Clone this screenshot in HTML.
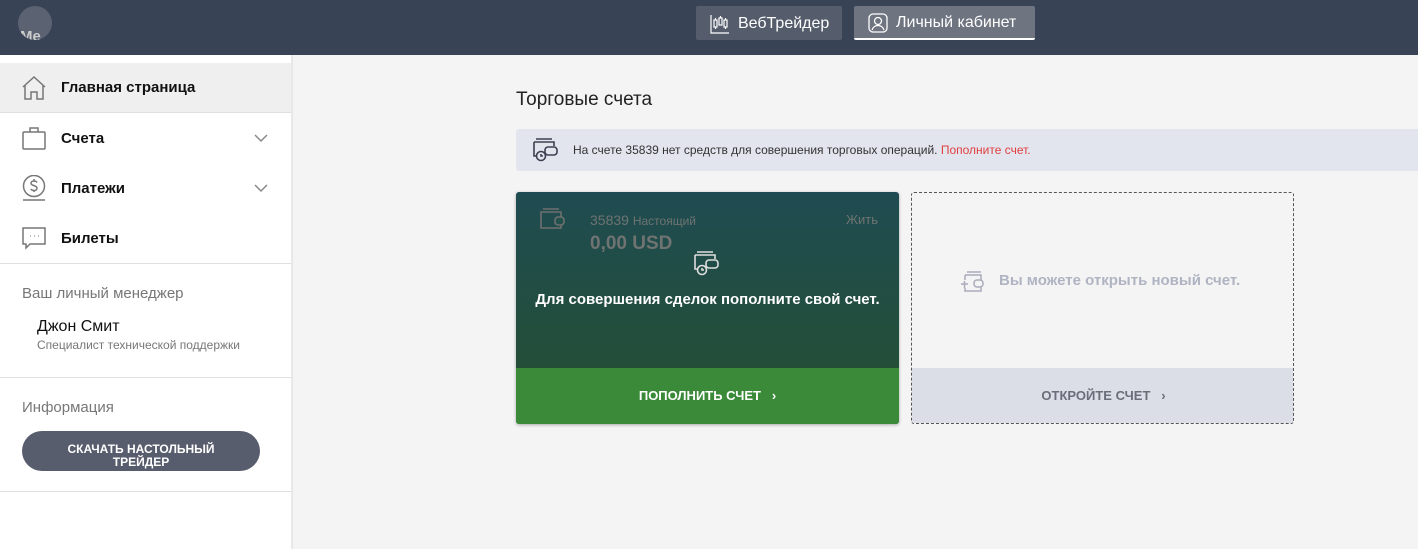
<!DOCTYPE html>
<html><head><meta charset="utf-8"><style>
*{box-sizing:border-box;margin:0;padding:0}
body{width:1418px;height:549px;overflow:hidden;background:#f4f4f4;font-family:"Liberation Sans",sans-serif;position:relative}
.hdr{position:absolute;left:0;top:0;width:1418px;height:55px;background:#394356}
.logo{position:absolute;left:18px;top:6px;width:34px;height:34px;border-radius:50%;background:#5b6272;overflow:hidden}
.logo span{position:absolute;left:2px;top:22px;color:#ccc;font-size:15px;font-weight:bold}
.tb{position:absolute;top:6px;height:34px;border-radius:2px;color:#fff;font-size:16px;display:flex;align-items:center}
.tb span{top:9px}
.side{position:absolute;left:0;top:55px;width:293px;height:494px;background:#fff;border-right:2px solid #e8e8e8}
.row{position:absolute;left:0;width:291px;height:50px;display:flex;align-items:center;font-size:15px;font-weight:bold;color:#111}
.row svg{position:absolute;left:22px}
.row span{position:absolute;left:61px}
.row .chev{position:absolute;left:254px}
.hr{position:absolute;left:0;width:291px;height:1px;background:#e0e0e0}
.card{position:absolute;left:516px;top:192px;width:383px;height:232px;border-radius:3px;overflow:hidden;box-shadow:0 1px 3px rgba(0,0,0,.3);background:linear-gradient(#1f4c52,#254f30)}
</style></head><body>
<div class="hdr">
<div class="logo"><span>Me</span></div>
<div class="tb" style="left:696px;width:146px;background:#555c6b">
<svg style="position:absolute;left:14px;top:8px" width="20" height="20" viewBox="0 0 20 20" fill="none" stroke="#fff" stroke-width="1.2"><path d="M1 1v18h18"/><rect x="4" y="6" width="3" height="7"/><rect x="9" y="4" width="3" height="7"/><rect x="14" y="6" width="3" height="7"/><path d="M5.5 4v2M5.5 13v2M10.5 2v2M15.5 4v2M15.5 13v2"/></svg>
<span style="position:absolute;left:42px;top:9px">ВебТрейдер</span></div>
<div class="tb" style="left:854px;width:181px;background:#6f7481;border-bottom:2px solid #fff">
<svg style="position:absolute;left:14px;top:7px" width="20" height="20" viewBox="0 0 20 20" fill="none" stroke="#fff" stroke-width="1.3"><rect x="1" y="1" width="18" height="18" rx="4"/><circle cx="10" cy="8" r="3.5"/><path d="M4 17c1-3 3.5-4.5 6-4.5s5 1.5 6 4.5"/></svg>
<span style="position:absolute;left:42px;top:8px">Личный кабинет</span></div>
</div>
<div class="side">
<div class="row" style="top:8px;background:#efefef;border-bottom:1px solid #e0e0e0">
<svg width="24" height="24" viewBox="0 0 24 24" fill="none" stroke="#777" stroke-width="1.5"><path d="M1 11L12 1l11 10M3 9v14h6v-7h6v7h6V9"/></svg><span>Главная страница</span></div>
<div class="row" style="top:58px">
<svg width="24" height="24" viewBox="0 0 24 24" fill="none" stroke="#777" stroke-width="1.5"><rect x="1" y="6" width="22" height="17" rx="1"/><path d="M8 6V2h8v4"/></svg><span>Счета</span>
<svg class="chev" width="14" height="14" viewBox="0 0 14 14" fill="none" stroke="#888" stroke-width="1.5"><path d="M1 4l6 6 6-6"/></svg></div>
<div class="row" style="top:108px">
<svg width="24" height="26" viewBox="0 0 24 26" fill="none" stroke="#777" stroke-width="1.5"><circle cx="12" cy="11" r="10.5"/><path d="M1 25h22"/><path d="M15 7.5c-.5-1-1.5-1.5-3-1.5-1.7 0-3 .9-3 2.3 0 3 6 1.7 6 4.9 0 1.4-1.3 2.3-3 2.3-1.5 0-2.6-.6-3.1-1.6M12 4v2M12 15v2"/></svg><span>Платежи</span>
<svg class="chev" width="14" height="14" viewBox="0 0 14 14" fill="none" stroke="#888" stroke-width="1.5"><path d="M1 4l6 6 6-6"/></svg></div>
<div class="row" style="top:158px">
<svg width="24" height="24" viewBox="0 0 24 24" fill="none" stroke="#777" stroke-width="1.5"><path d="M1 2h22v16H8l-4 4v-4H1z"/><path d="M8 10h.5M12 10h.5M16 10h.5" stroke-width="2"/></svg><span>Билеты</span></div>
<div class="hr" style="top:208px"></div>
<div style="position:absolute;left:22px;top:230px;font-size:15px;color:#777">Ваш личный менеджер</div>
<div style="position:absolute;left:37px;top:263px;font-size:16px;color:#111">Джон Смит</div>
<div style="position:absolute;left:37px;top:283px;font-size:12px;color:#777">Специалист технической поддержки</div>
<div class="hr" style="top:322px"></div>
<div style="position:absolute;left:22px;top:344px;font-size:15px;color:#777">Информация</div>
<div style="position:absolute;left:22px;top:376px;width:238px;height:40px;border-radius:20px;background:#585d6d;color:#fff;font-size:12px;font-weight:bold;text-align:center;line-height:13px;padding-top:12px">СКАЧАТЬ НАСТОЛЬНЫЙ<br>ТРЕЙДЕР</div>
<div class="hr" style="top:436px"></div>
</div>
<div style="position:absolute;left:516px;top:89px;font-size:19px;color:#222">Торговые счета</div>
<div style="position:absolute;left:516px;top:129px;width:902px;height:42px;background:#e2e4ee;border-radius:3px 0 0 3px">
<svg style="position:absolute;left:17px;top:9px" width="26" height="24" viewBox="0 0 26 24" fill="none" stroke="#3c4050" stroke-width="1.6"><path d="M3 1h16M1 4h20v4M1 4v14h6"/><rect x="12" y="9" width="12" height="8" rx="3"/><circle cx="8" cy="18" r="4.5" fill="#e2e4ee"/><path d="M8 16v2h2"/></svg>
<div style="position:absolute;left:57px;top:14px;font-size:12px;color:#333">На счете 35839 нет средств для совершения торговых операций. <span style="color:#e04040">Пополните счет.</span></div>
</div>
<div class="card">
<svg style="position:absolute;left:24px;top:16px" width="26" height="24" viewBox="0 0 26 24" fill="none" stroke="#6f6f6f" stroke-width="1.6"><path d="M3 1h16M1 4h20v16H1zM1 4"/><rect x="15" y="9" width="9" height="8" rx="3" fill="#21504d"/></svg>
<div style="position:absolute;left:74px;top:20px;font-size:14px;color:#6f7371">35839 <span style="font-size:12px">Настоящий</span></div>
<div style="position:absolute;right:21px;top:20px;font-size:13px;color:#6f7371">Жить</div>
<div style="position:absolute;left:74px;top:41px;font-size:19px;font-weight:bold;color:#6f7371">0,00 USD</div>
<svg style="position:absolute;left:178px;top:59px" width="26" height="26" viewBox="0 0 26 26" fill="none" stroke="#ddd" stroke-width="1.6"><path d="M3 1h16M1 4h20v4M1 4v14h6"/><rect x="12" y="9" width="12" height="8" rx="3"/><circle cx="8" cy="19" r="4.5" fill="#234f45"/><path d="M8 17v2h2"/></svg>
<div style="position:absolute;left:0;width:383px;top:99px;text-align:center;font-size:15px;font-weight:bold;color:#fff">Для совершения сделок пополните свой счет.</div>
<div style="position:absolute;left:0;top:176px;width:383px;height:56px;background:#3a8a3a;color:#fff;font-size:13px;font-weight:bold;text-align:center;line-height:56px">ПОПОЛНИТЬ СЧЕТ &nbsp;&nbsp;›</div>
</div>
<div style="position:absolute;left:911px;top:192px;width:383px;height:232px;border:1px dashed #555;border-radius:3px;overflow:hidden">
<svg style="position:absolute;left:48px;top:78px" width="26" height="22" viewBox="0 0 26 22" fill="none" stroke="#aab" stroke-width="1.5"><path d="M7 1h14M5 4h16v16H5v-3M5 9V4M1 13h7M4.5 10v7"/><rect x="14" y="9" width="9" height="7" rx="3" fill="#f4f4f4"/></svg>
<div style="position:absolute;left:87px;top:79px;font-size:15px;font-weight:bold;color:#b0b4c2">Вы можете открыть новый счет.</div>
<div style="position:absolute;left:0;top:175px;width:383px;height:56px;background:#dbdee6;color:#6a6e7a;font-size:13px;font-weight:bold;text-align:center;line-height:56px">ОТКРОЙТЕ СЧЕТ &nbsp;&nbsp;›</div>
</div>
</body></html>
